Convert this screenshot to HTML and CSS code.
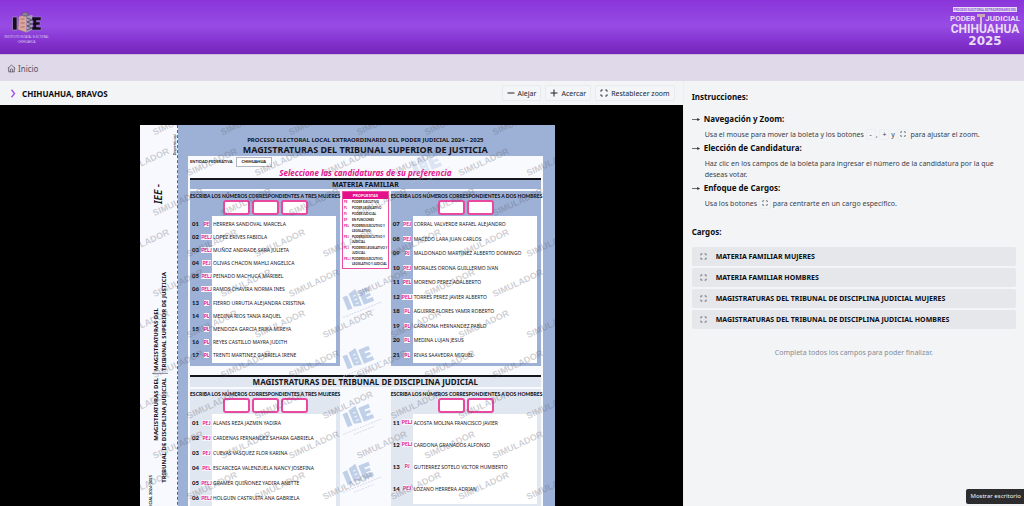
FILE: index.html
```html
<!DOCTYPE html>
<html lang="es">
<head>
<meta charset="utf-8">
<meta name="viewport" content="width=device-width, initial-scale=1">
<title>Simulador de boleta</title>
<link rel="stylesheet" href="styles.css">
</head>
<body>
<svg class="defs" aria-hidden="true">
  <symbol id="focus" viewBox="0 0 16 16"><path d="M2 5.500V2h3.500M10.500 2H14v3.500M14 10.500V14h-3.500M5.500 14H2v-3.500" fill="none" stroke="currentColor" stroke-width="1.800"/></symbol>
  <symbol id="arrow" viewBox="0 0 16 16"><path d="M0 9h12M11 7l4 2-4 2z" fill="currentColor" stroke="currentColor" stroke-width="1.400"/></symbol>
</svg>
<header class="brand">
  <svg class="logo-iee" viewBox="0 0 50 34" role="img" aria-label="Instituto Estatal Electoral Chihuahua">
    <path d="M10.500 7h4.500v13h-4.500z" fill="#160b25" stroke="#b79bd0" stroke-width=".6"/>
    <path d="M17 6.500l7.500-2v18L16 19.500z" fill="#dba59b" stroke="#8f6f91" stroke-width=".5"/>
    <path d="M18.500 9h4M18.500 13h4M18.500 17h4" stroke="#b9827f" stroke-width="1.300"/>
    <path d="M24.500 6l6-1v14.500l-6 3z" fill="#a8a0b6"/>
    <path d="M25 8l5 2-5 2 5 2-5 2 5 2-5 2" fill="none" stroke="#5b4c6b" stroke-width="1"/>
    <path d="M30 7h9v3.500h-4.500v1.500H38v3h-3.500v2H39V20h-9v-2.500l1.500-1.500-1.500-2 1.500-2-1.500-2z" fill="#160b25" stroke="#b79bd0" stroke-width=".4"/>
    <path d="M19 4l4-2 4 2-1.500 2h-4z" fill="#8d829a" stroke="#5b4c6b" stroke-width=".7"/>
    <text x="24.500" y="28" class="logo-small">INSTITUTO ESTATAL ELECTORAL</text>
    <text x="24.500" y="33" class="logo-small">CHIHUAHUA</text>
  </svg>
  <svg class="logo-pj" viewBox="0 0 72 40" role="img" aria-label="Poder Judicial Chihuahua 2025">
    <rect x="4" y="0" width="64" height="5" fill="#e9dcf5"/>
    <text x="36" y="3.800" class="pj-tiny">PROCESO ELECTORAL EXTRAORDINARIO DEL</text>
    <text x="1" y="14" class="pj-top">PODER</text>
    <text x="71" y="14" class="pj-top pj-end">JUDICIAL</text>
    <path d="M28 7h8v3h-8z" fill="#c9a9b1"/><path d="M31 10h2v7h-2z" fill="#d5b9cc"/>
    <text x="36" y="26" class="pj-mid">CHIHUAHUA</text>
    <text x="36" y="38" class="pj-year">2025</text>
  </svg>
</header>
<nav class="crumbs" aria-label="Ruta">
  <a href="#"><svg viewBox="0 0 16 16" aria-hidden="true"><path d="M1.500 7.500L8 2l6.500 5.500M3 6.500V14h10V6.500M6 14v-3.500a2 2 0 0 1 4 0V14" fill="none" stroke="currentColor" stroke-width="1.400"/></svg>Inicio</a>
</nav>
<main class="work">
  <section class="viewer">
    <div class="toolbar">
      <svg class="chev" viewBox="0 0 8 12" aria-hidden="true"><path d="M2 1l4 5-4 5" fill="none" stroke="#a04df0" stroke-width="1.800"/></svg>
      <h1>CHIHUAHUA, BRAVOS</h1>
      <div class="tools">
        <button type="button"><svg viewBox="0 0 16 16" aria-hidden="true"><path d="M1 8h14" stroke="currentColor" stroke-width="2"/></svg>Alejar</button>
        <button type="button"><svg viewBox="0 0 16 16" aria-hidden="true"><path d="M1 8h14M8 1v14" stroke="currentColor" stroke-width="2"/></svg>Acercar</button>
        <button type="button"><svg aria-hidden="true"><use href="#focus"/></svg>Restablecer zoom</button>
      </div>
    </div>
    <div class="canvas">
      <article class="ballot">
        <aside class="stub">
          <span class="tear">Desprenda aquí</span>
          <span class="iee">IEE -</span>
          <p class="side first">MAGISTRATURAS DEL<br>TRIBUNAL SUPERIOR DE JUSTICIA</p>
          <p class="side second">MAGISTRATURAS DEL<br>TRIBUNAL DE DISCIPLINA JUDICIAL</p>
          <span class="process">PODER JUDICIAL 2024-2025</span>
        </aside>
        <div class="sheet">
          <div class="titles">
            <p>PROCESO ELECTORAL LOCAL EXTRAORDINARIO DEL PODER JUDICIAL 2024 - 2025</p>
            <h2>MAGISTRATURAS DEL TRIBUNAL SUPERIOR DE JUSTICIA</h2>
          </div>
          <div class="paper">
            <div class="entity"><span>ENTIDAD FEDERATIVA</span><b>CHIHUAHUA</b></div>
            <p class="hint">Seleccione las candidaturas de su preferencia</p>
            <section class="race family">
              <h3>MATERIA FAMILIAR</h3>
              <div class="cols">
                <div class="col">
                  <h4>ESCRIBA LOS NÚMEROS CORRESPONDIENTES A TRES MUJERES</h4>
                  <div class="boxes"><input aria-label="Mujer 1"><input aria-label="Mujer 2"><input aria-label="Mujer 3"></div>
                  <ol>
                    <li><b>01</b><i>PE</i><span>HERRERA SANDOVAL MARCELA</span></li>
                    <li><b>02</b><i>PELJ</i><span>LOPEZ ERIVES FABIOLA</span></li>
                    <li><b>03</b><i>PELJ</i><span>MUÑOZ ANDRADE SARA JULIETA</span></li>
                    <li><b>04</b><i>PEJ</i><span>OLIVAS CHACON MAHLI ANGELICA</span></li>
                    <li><b>05</b><i>PELJ</i><span>PEINADO MACHUCA MARIBEL</span></li>
                    <li><b>06</b><i>PELJ</i><span>RAMOS CHAVIRA NORMA INES</span></li>
                    <li><b>13</b><i>PL</i><span>FIERRO URRUTIA ALEJANDRA CRISTINA</span></li>
                    <li><b>14</b><i>PL</i><span>MEDINA RIOS TANIA RAQUEL</span></li>
                    <li><b>15</b><i>PL</i><span>MENDOZA GARCIA ERIKA MIREYA</span></li>
                    <li><b>16</b><i>PL</i><span>REYES CASTILLO MAYRA JUDITH</span></li>
                    <li><b>17</b><i>PL</i><span>TRENTI MARTINEZ GABRIELA IRENE</span></li>
                  </ol>
                </div>
                <div class="mid">
                  <dl class="legend">
                    <div class="cap">PROPUESTAS</div>
                    <div><dt>PE</dt><dd>PODER EJECUTIVO</dd></div>
                    <div><dt>PL</dt><dd>PODER LEGISLATIVO</dd></div>
                    <div><dt>PJ</dt><dd>PODER JUDICIAL</dd></div>
                    <div><dt>EF</dt><dd>EN FUNCIONES</dd></div>
                    <div><dt>PEL</dt><dd>PODERES EJECUTIVO Y LEGISLATIVO</dd></div>
                    <div><dt>PEJ</dt><dd>PODERES EJECUTIVO Y JUDICIAL</dd></div>
                    <div><dt>PLJ</dt><dd>PODERES LEGISLATIVO Y JUDICIAL</dd></div>
                    <div><dt>PELJ</dt><dd>PODERES EJECUTIVO, LEGISLATIVO Y JUDICIAL</dd></div>
                  </dl>
                </div>
                <div class="col">
                  <h4>ESCRIBA LOS NÚMEROS CORRESPONDIENTES A DOS HOMBRES</h4>
                  <div class="boxes"><input aria-label="Hombre 1"><input aria-label="Hombre 2"></div>
                  <ol>
                    <li><b>07</b><i>PEJ</i><span>CORRAL VALVERDE RAFAEL ALEJANDRO</span></li>
                    <li><b>08</b><i>PEJ</i><span>MACEDO LARA JUAN CARLOS</span></li>
                    <li><b>09</b><i>PJ</i><span>MALDONADO MARTINEZ ALBERTO DOMINGO</span></li>
                    <li><b>10</b><i>PEJ</i><span>MORALES ORONA GUILLERMO IVAN</span></li>
                    <li><b>11</b><i>PEL</i><span>MORENO PEREZ ADALBERTO</span></li>
                    <li><b>12</b><i>PELJ</i><span>TORRES PEREZ JAVIER ALBERTO</span></li>
                    <li><b>18</b><i>PL</i><span>AGUIRRE FLORES YAMIR ROBERTO</span></li>
                    <li><b>19</b><i>PL</i><span>CARMONA HERNANDEZ PABLO</span></li>
                    <li><b>20</b><i>PL</i><span>MEDINA LUJAN JESUS</span></li>
                    <li><b>21</b><i>PL</i><span>RIVAS SAAVEDRA MIGUEL</span></li>
                  </ol>
                </div>
              </div>
            </section>
            <section class="race discipline">
              <h3>MAGISTRATURAS DEL TRIBUNAL DE DISCIPLINA JUDICIAL</h3>
              <div class="cols">
                <div class="col">
                  <h4>ESCRIBA LOS NÚMEROS CORRESPONDIENTES A TRES MUJERES</h4>
                  <div class="boxes"><input aria-label="Disciplina, mujer 1"><input aria-label="Disciplina, mujer 2"><input aria-label="Disciplina, mujer 3"></div>
                  <ol>
                    <li><b>01</b><i>PEJ</i><span>ALANIS REZA JAZMIN YADIRA</span></li>
                    <li><b>02</b><i>PEJ</i><span>CARDENAS FERNANDEZ SAHARA GABRIELA</span></li>
                    <li><b>03</b><i>PEJ</i><span>CUEVAS VASQUEZ FLOR KARINA</span></li>
                    <li><b>04</b><i>PEL</i><span>ESCARCEGA VALENZUELA NANCY JOSEFINA</span></li>
                    <li><b>05</b><i>PELJ</i><span>GRAMER QUIÑONEZ YADIRA ANETTE</span></li>
                    <li><b>06</b><i>PELJ</i><span>HOLGUIN CASTRUITA ANA GABRIELA</span></li>
                  </ol>
                </div>
                <div class="mid"></div>
                <div class="col wide">
                  <h4>ESCRIBA LOS NÚMEROS CORRESPONDIENTES A DOS HOMBRES</h4>
                  <div class="boxes"><input aria-label="Disciplina, hombre 1"><input aria-label="Disciplina, hombre 2"></div>
                  <ol>
                    <li><b>11</b><i>PELJ</i><span>ACOSTA MOLINA FRANCISCO JAVIER</span></li>
                    <li><b>12</b><i>PELJ</i><span>CARDONA GRANADOS ALFONSO</span></li>
                    <li><b>13</b><i>PJ</i><span>GUTIERREZ SOTELO VICTOR HUMBERTO</span></li>
                    <li><b>14</b><i>PEJ</i><span>LOZANO HERRERA ADRIAN</span></li>
                  </ol>
                </div>
              </div>
            </section>
          </div>
        </div>
        <svg class="marks" viewBox="0 0 415 420" aria-hidden="true">
          <defs>
            <g id="mk"><text transform="rotate(-25)" y="3">SIMULADOR</text></g>
            <g id="row"><use href="#mk" x="4"/><use href="#mk" x="72"/><use href="#mk" x="140"/><use href="#mk" x="208"/><use href="#mk" x="276"/><use href="#mk" x="344"/><use href="#mk" x="412"/></g>
            <g id="seal" transform="rotate(-22)" fill="#a9bfe0" stroke="none">
              <path d="M-13-6h5v14h-5zM-6-7l8-2v18l-8-2zM4-6h11v4H9v2h5v3H9v2h6v4H4z"/>
              <path d="M-3-3h3M-3 1h3M-3 5h3" stroke="#f5f7fc"/>
              <path d="M-20 13h42M-10 17h22" stroke="#c6d2e8" stroke-dasharray="2 1"/>
            </g>
          </defs>
          <g opacity=".7"><use href="#seal" x="217" y="173"/><use href="#seal" x="217" y="232"/><use href="#seal" x="217" y="290"/><use href="#seal" x="217" y="348"/></g>
          <g opacity=".35"><use href="#seal" x="285" y="38"/></g>
          <use href="#row" x="-34" y="-4"/><use href="#row" y="37"/><use href="#row" x="-34" y="77"/><use href="#row" y="118"/><use href="#row" x="-34" y="158"/><use href="#row" y="199"/><use href="#row" x="-34" y="239"/><use href="#row" y="280"/><use href="#row" x="-34" y="320"/><use href="#row" y="361"/><use href="#row" x="-34" y="401"/>
        </svg>
      </article>
    </div>
  </section>
  <aside class="help">
    <h2>Instrucciones:</h2>
    <ul class="steps">
      <li><svg aria-hidden="true"><use href="#arrow"/></svg><h3>Navegación y Zoom:</h3>
        <p>Usa el mouse para mover la boleta y los botones <kbd>-</kbd>, <kbd>+</kbd> y <kbd><svg aria-hidden="true"><use href="#focus"/></svg></kbd> para ajustar el zoom.</p></li>
      <li><svg aria-hidden="true"><use href="#arrow"/></svg><h3>Elección de Candidatura:</h3>
        <p>Haz clic en los campos de la boleta para ingresar el número de la candidatura por la que deseas votar.</p></li>
      <li><svg aria-hidden="true"><use href="#arrow"/></svg><h3>Enfoque de Cargos:</h3>
        <p>Usa los botones <kbd><svg aria-hidden="true"><use href="#focus"/></svg></kbd> para centrarte en un cargo específico.</p></li>
    </ul>
    <h2 class="posts-title">Cargos:</h2>
    <div class="posts">
      <button type="button"><svg aria-hidden="true"><use href="#focus"/></svg>MATERIA FAMILIAR MUJERES</button>
      <button type="button"><svg aria-hidden="true"><use href="#focus"/></svg>MATERIA FAMILIAR HOMBRES</button>
      <button type="button"><svg aria-hidden="true"><use href="#focus"/></svg>MAGISTRATURAS DEL TRIBUNAL DE DISCIPLINA JUDICIAL MUJERES</button>
      <button type="button"><svg aria-hidden="true"><use href="#focus"/></svg>MAGISTRATURAS DEL TRIBUNAL DE DISCIPLINA JUDICIAL HOMBRES</button>
    </div>
    <p class="note">Completa todos los campos para poder finalizar.</p>
  </aside>
</main>
<div class="tip" role="tooltip">Mostrar escritorio</div>
</body>
</html>
```
FILE: styles.css
```css
* { box-sizing: border-box; margin: 0; padding: 0; }
body { height: 100vh; display: flex; flex-direction: column; overflow: hidden; background: #f3f4f6; color: #0b0d12; font-family: "Noto Sans", "Open Sans", sans-serif; font-size: 7px; line-height: 11px; }
.defs { position: absolute; width: 0; height: 0; }
button, input { font: inherit; color: inherit; }
button { cursor: pointer; border: 0; }
ul, ol { list-style: none; }

.brand { flex: none; display: flex; justify-content: space-between; align-items: center; height: 54px; padding: 0 3px 0 2px; background: linear-gradient(#8a35da 0%, #974ce4 48%, #8737d3 72%, #7524b9 100%); }
.logo-iee { width: 50px; height: 34px; }
.logo-small { font: 3px "Noto Sans", sans-serif; fill: #dcc6f1; text-anchor: middle; }
.logo-pj { width: 72px; height: 40px; font-family: Roboto, sans-serif; font-weight: 700; fill: #e9dcf5; }
.pj-tiny { font-size: 3px; fill: #8e52cf; text-anchor: middle; }
.pj-top { font-size: 8px; }
.pj-end { text-anchor: end; }
.pj-mid { font-size: 12px; text-anchor: middle; }
.pj-year { font: 700 12px "DejaVu Sans", sans-serif; text-anchor: middle; }

.crumbs { flex: none; height: 27px; display: flex; align-items: center; padding: 0 7px; border-top: 1px solid #cbb9df; background: #e0d9ea; }
.crumbs a { display: flex; align-items: center; gap: 2px; color: #55525c; font-size: 8px; text-decoration: none; }
.crumbs svg { width: 9px; height: 9px; }

.work { flex: 1; min-height: 0; display: grid; grid-template-columns: 2fr 1fr; }
.viewer { min-width: 0; min-height: 0; display: flex; flex-direction: column; }
.toolbar { flex: none; height: 24px; display: flex; align-items: center; padding: 0 8px 0 10px; }
.toolbar h1 { margin-left: 6px; font-size: 8px; }
.chev { width: 6px; height: 9px; }
.tools { margin-left: auto; display: flex; gap: 4px; }
.tools button { display: flex; align-items: center; gap: 3px; height: 16px; padding: 0 4px; border: 1px solid #e8eaee; border-radius: 2px; background: #f4f5f7; color: #22252b; }
.tools svg { width: 8px; height: 8px; }

.canvas { flex: 1; min-height: 0; overflow: hidden; padding: 20px 128px 0 140px; background: #000; }
.ballot { position: relative; display: grid; grid-template-columns: 38px 1fr; min-height: 420px; overflow: hidden; background: #9db1d6; font-family: Lato, sans-serif; font-size: 6px; line-height: 8px; color: #15151c; }
.stub { display: flex; flex-direction: column; align-items: flex-start; background: #f8f9fe; border-right: 1px dashed #56617c; }
.stub > * { writing-mode: vertical-rl; transform: rotate(180deg); font-weight: 700; }
.tear { align-self: flex-end; padding-bottom: 9px; font-size: 3px; line-height: 4px; }
.iee { margin: 29px 0 0 12px; font: italic 600 10px/12px "Noto Sans", sans-serif; }
.side { margin-left: 12px; font: 700 6px/8px "Noto Sans", sans-serif; white-space: nowrap; }
.first { margin-top: 68px; padding-top: 2px; border-top: 1px solid #8c92a2; }
.second { margin-top: 4px; text-align: right; }
.process { margin: -8px 0 0 8px; font-size: 4px; line-height: 6px; }

.sheet { min-width: 0; padding: 0 12px 0 10px; }
.titles { padding-top: 11px; font-family: "Noto Sans", sans-serif; font-weight: 700; text-align: center; white-space: nowrap; }
.titles p { font-size: 6px; line-height: 8px; }
.titles h2 { font-size: 9px; line-height: 12px; }
.paper { padding: 1px 2px; background: #f9fafe; }
.entity { display: flex; align-items: center; gap: 3px; font-size: 4px; font-weight: 700; }
.entity b { padding: 0 5px; border: 1px solid #b5b8c2; background: #fff; }
.hint { text-align: center; color: #e5118a; font: italic 700 8px/11px "Noto Sans", sans-serif; }
.race h3 { border-top: 2px solid #15151c; text-align: center; font: 700 8px/9px "Noto Sans", sans-serif; white-space: nowrap; }
.cols { display: grid; grid-template-columns: 150px 1fr 150px; margin-top: 2px; }
.col { display: flex; flex-direction: column; padding-right: 4px; }
.family h3, .family .col { background: #9db1d6; }
.family h3 { font-size: 7px; }
.family .col { height: 175px; padding-bottom: 3px; }
.discipline { margin-top: 9px; }
.discipline h3, .discipline .col { background: #e1e7f1; }
.discipline h3 { line-height: 10px; }
.col h4 { padding-top: 1px; text-align: center; font-size: 5px; font-weight: 900; line-height: 8px; white-space: nowrap; }
.boxes { display: flex; justify-content: center; gap: 2px; height: 16px; padding-left: 4px; }
.boxes input { width: 27px; height: 15px; border: 2px solid #e9489f; border-radius: 3px; background: #fff; text-align: center; }
.col ol { flex: 1; display: flex; flex-direction: column; justify-content: space-around; padding: 1px 0; background: linear-gradient(#fff, #fff) 22px 0 no-repeat; }
.discipline ol { flex: none; justify-content: flex-start; }
.discipline li { min-height: 15px; }
.discipline .wide li { min-height: 22px; align-items: start; padding-top: 4px; }
.col li { display: grid; grid-template-columns: 9px 11px 1fr; align-items: center; padding-left: 2px; white-space: nowrap; }
.col li b { font-weight: 900; }
.col li span { padding-left: 1px; font-family: "Noto Sans", sans-serif; font-size: 5px; }
.col li i { justify-self: center; background: #f8f4fb; color: #e5118a; font-size: 5px; font-weight: 700; font-style: normal; line-height: 6px; }
.mid { padding: 0 2px; }
.legend { border: 1px solid #ec4ba2; background: #fff; font-size: 3px; line-height: 5px; font-weight: 700; }
.legend .cap { display: block; padding: 1px 0; margin-bottom: 1px; background: #e5118a; color: #fff; text-align: center; font-size: 4px; }
.legend div { display: grid; grid-template-columns: 9px 1fr; padding-bottom: 1px; }
.legend dt { padding-left: 1px; color: #e5118a; }
.marks { position: absolute; inset: 0; width: 100%; height: 420px; pointer-events: none; font: 700 9px "Liberation Sans", sans-serif; fill: rgba(90, 94, 108, .3); text-anchor: middle; }

.help { padding: 10px 8px; border-left: 1px solid #eceef1; }
.help h2 { font-size: 8px; line-height: 12px; }
.steps { margin-top: 10px; }
.steps li { display: grid; grid-template-columns: 12px 1fr; align-items: center; }
.steps li > svg { width: 8px; height: 8px; color: #333; }
.steps h3 { font-size: 8px; line-height: 12px; }
.steps p { grid-column: 2; padding: 4px 12px 2px 1px; color: #3a3f49; }
kbd { display: inline-block; min-width: 10px; padding: 0 2px; border: 1px solid #eceef1; border-radius: 2px; text-align: center; font: inherit; line-height: 9px; }
kbd svg { width: 6px; height: 6px; }
.help .posts-title { margin-top: 15px; }
.posts { display: grid; gap: 2px; margin-top: 9px; }
.posts button { display: flex; align-items: center; gap: 9px; min-height: 19px; padding: 0 8px; border-radius: 2px; background: #e5e7eb; font-weight: 700; text-align: left; }
.posts svg { width: 7px; height: 7px; color: #555a64; }
.note { margin-top: 18px; text-align: center; color: #858b95; }
.tip { position: fixed; right: 0; bottom: 2px; padding: 2px 3px 2px 5px; border-radius: 2px 0 0 2px; background: #2c2c2e; color: #f2f2f2; font-size: 6px; }
```
